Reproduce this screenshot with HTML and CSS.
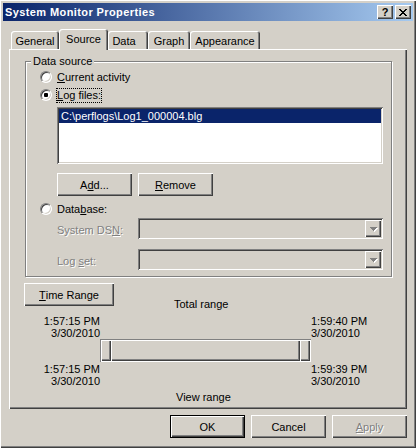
FILE: index.html
```html
<!DOCTYPE html>
<html lang="en">
  <head>
    <meta charset="UTF-8" />
    <title>System Monitor Properties</title>
    <link rel="stylesheet" href="styles.css">
  </head>
  <body>

    <div class="window">
      <div class="titlebar">
        <span class="title">System Monitor Properties</span>
        <span class="cap-btn">?</span>
        <span class="cap-btn">
          <svg width="8" height="7" viewBox="0 0 8 7" shape-rendering="crispEdges">
            <path d="M0 0h2v1h-2z M6 0h2v1h-2z M1 1h2v1h-2z M5 1h2v1h-2z M2 2h4v1h-4z M3 3h2v1h-2z M2 4h4v1h-4z M1 5h2v1h-2z M5 5h2v1h-2z M0 6h2v1h-2z M6 6h2v1h-2z" fill="#000"/>
          </svg>
        </span>
      </div>

      <div class="dialog">
        <div class="tabs">
          <div class="tab tab-general">General</div>
          <div class="tab tab-source active">Source</div>
          <div class="tab tab-data">Data</div>
          <div class="tab tab-graph">Graph</div>
          <div class="tab tab-appearance">Appearance</div>
        </div>

        <div class="panel">
          <div class="group">
            <div class="group-title">Data source</div>

            <div class="option first">
              <span class="radio"></span>
              <span><u>C</u>urrent activity</span>
            </div>
            <div class="option second">
              <span class="radio checked"></span>
              <span class="focus"><u>L</u>og files:</span>
            </div>

            <div class="listbox">
              <div class="list-item selected">C:\perflogs\Log1_000004.blg</div>
            </div>

            <div class="btn-row">
              <button class="btn">A<u>d</u>d...</button>
              <button class="btn"><u>R</u>emove</button>
            </div>

            <div class="option database">
              <span class="radio"></span>
              <span>Data<u>b</u>ase:</span>
            </div>

            <div class="field field-dsn">
              <span class="field-label disabled">System DS<u>N</u>:</span>
              <div class="combo">
                <span class="combo-btn">
                  <svg width="8" height="5" viewBox="0 0 8 5" shape-rendering="crispEdges">
                    <path d="M1 1h7v1h-7z M2 2h5v1h-5z M3 3h3v1h-3z M4 4h1v1h-1z" fill="#fff"/>
                    <path d="M0 0h7v1h-7z M1 1h5v1h-5z M2 2h3v1h-3z M3 3h1v1h-1z" fill="#808080"/>
                  </svg>
                </span>
              </div>
            </div>

            <div class="field field-logset">
              <span class="field-label disabled">Log <u>s</u>et:</span>
              <div class="combo">
                <span class="combo-btn">
                  <svg width="8" height="5" viewBox="0 0 8 5" shape-rendering="crispEdges">
                    <path d="M1 1h7v1h-7z M2 2h5v1h-5z M3 3h3v1h-3z M4 4h1v1h-1z" fill="#fff"/>
                    <path d="M0 0h7v1h-7z M1 1h5v1h-5z M2 2h3v1h-3z M3 3h1v1h-1z" fill="#808080"/>
                  </svg>
                </span>
              </div>
            </div>
          </div>

          <div class="range">
            <div class="range-head">
              <button class="btn btn-time"><u>T</u>ime Range</button>
              <span class="range-caption total">Total range</span>
            </div>

            <div class="range-grid">
              <div class="time time-left">1:57:15 PM<br>3/30/2010</div>
              <div></div>
              <div class="time">1:59:40 PM<br>3/30/2010</div>

              <div></div>
              <div class="slider">
                <span class="thumb"></span>
                <span class="track-mid"></span>
                <span class="thumb"></span>
              </div>
              <div></div>

              <div class="time time-left">1:57:15 PM<br>3/30/2010</div>
              <div></div>
              <div class="time">1:59:39 PM<br>3/30/2010</div>
            </div>

            <div class="range-caption view">View range</div>
          </div>
        </div>

        <div class="actions">
          <button class="btn btn-default">OK</button>
          <button class="btn">Cancel</button>
          <button class="btn disabled"><u>A</u>pply</button>
        </div>
      </div>
    </div>

  </body>
</html>
```

FILE: styles.css
```css
* {
  box-sizing: border-box;
}

body {
  margin: 0;
  padding: 0;
  background-color: #d4d0c8;
  font-family: "Liberation Sans", Arial, sans-serif;
  font-size: 11px;
  color: #000;
}

/* window frame */
.window {
  width: 416px;
  height: 448px;
  padding: 3px;
  background-color: #d4d0c8;
  box-shadow: inset 1px 1px #fff, inset -1px -1px #404040, inset -2px -2px #808080;
}

.titlebar {
  display: flex;
  align-items: center;
  height: 18px;
  padding: 0 2px;
  background: linear-gradient(to right, #0a246a, #a6caf0);
  color: #fff;
  font-weight: bold;
}

.title {
  flex: 1;
  line-height: 13px;
  letter-spacing: 0.4px;
}

.cap-btn {
  display: flex;
  align-items: center;
  justify-content: center;
  width: 16px;
  height: 14px;
  margin-left: 2px;
  background-color: #d4d0c8;
  color: #000;
  line-height: 14px;
  box-shadow: inset 1px 1px #fff, inset -1px -1px #404040, inset -2px -2px #808080;
}

.dialog {
  padding-top: 8px;
}

/* tabs */
.tabs {
  display: flex;
  align-items: flex-end;
  height: 20px;
  margin-left: 8px;
}

.tab {
  height: 18px;
  padding-top: 2px;
  line-height: 16px;
  text-align: center;
  border-radius: 3px 3px 0 0;
  box-shadow: inset 1px 1px #fff, inset -1px 0 #404040, inset -2px 0 #808080;
}

.tab.active {
  position: relative;
  z-index: 1;
  height: 21px;
  margin-bottom: -1px;
  background-color: #d4d0c8;
}

.tab-general { width: 48px; }
.tab-source { width: 49px; }
.tab-data { width: 40px; padding-right: 8px; }
.tab-graph { width: 42px; }
.tab-appearance { width: 70px; }

.panel {
  height: 360px;
  margin: 0 6px;
  padding-top: 12px;
  box-shadow: inset 1px 1px #fff, inset -1px -1px #404040, inset -2px -2px #808080;
}

/* Data source group */
.group {
  width: 367px;
  margin-left: 16px;
  padding: 0 0 6px 14px;
  border: 1px solid #808080;
  box-shadow: inset 1px 1px #fff, 1px 1px #fff;
}

.group-title {
  width: fit-content;
  margin: -7px 0 0 -9px;
  padding: 0 2px;
  line-height: 13px;
  background-color: #d4d0c8;
}

.option {
  display: flex;
  align-items: center;
  gap: 5px;
  height: 16px;
}

.option.first { margin-top: 1px; }
.option.second { margin-top: 2px; gap: 4px; }
.option.database { margin-top: 5px; }

.radio {
  width: 12px;
  height: 12px;
  border-radius: 50%;
  border: 1px solid;
  border-color: #808080 #fff #fff #808080;
  background-color: #fff;
  box-shadow: inset 1px 1px #404040, inset -1px -1px #d4d0c8;
}

.radio.checked {
  background: radial-gradient(circle, #000 2px, #fff 2.5px);
}

.focus {
  border: 1px dotted #000;
  line-height: 13px;
}

.listbox {
  width: 326px;
  height: 57px;
  margin: 4px 0 0 17px;
  padding: 2px;
  background-color: #fff;
  box-shadow: inset 1px 1px #808080, inset -1px -1px #fff, inset 2px 2px #404040, inset -2px -2px #d4d0c8;
}

.list-item {
  height: 14px;
  padding-left: 2px;
  line-height: 15px;
}

.list-item.selected {
  background-color: #0a246a;
  color: #fff;
}

/* buttons */
.btn {
  display: flex;
  align-items: center;
  justify-content: center;
  width: 75px;
  height: 23px;
  padding: 0;
  border: none;
  background-color: #d4d0c8;
  font: inherit;
  color: #000;
  box-shadow: inset 1px 1px #fff, inset -1px -1px #404040, inset -2px -2px #808080;
}

.btn-row {
  display: flex;
  gap: 6px;
  margin: 9px 0 0 17px;
}

.btn-default {
  box-shadow: inset 0 0 0 1px #000, inset 2px 2px #fff, inset -2px -2px #404040, inset -3px -3px #808080;
}

.btn.disabled,
.disabled {
  color: #808080;
  text-shadow: 1px 1px #fff;
}

/* disabled combo fields */
.field {
  display: flex;
  margin-left: 17px;
}

.field-dsn { margin-top: 1px; }
.field-logset { margin-top: 10px; }

.field-label {
  width: 81px;
  padding-top: 4px;
  line-height: 16px;
}

.combo {
  display: flex;
  justify-content: flex-end;
  width: 245px;
  height: 21px;
  padding: 2px;
  box-shadow: inset 1px 1px #808080, inset -1px -1px #fff, inset 2px 2px #404040, inset -2px -2px #d4d0c8;
}

.combo-btn {
  display: flex;
  align-items: center;
  justify-content: center;
  width: 16px;
  height: 17px;
  padding: 1px 0 0 1px;
  box-shadow: inset 1px 1px #fff, inset -1px -1px #404040, inset -2px -2px #808080;
}

/* time range */
.range {
  margin-left: 15px;
}

.range-head {
  display: flex;
  align-items: flex-start;
  margin-top: 6px;
}

.btn-time {
  width: 90px;
}

.range-caption {
  display: block;
  line-height: 13px;
}

.range-caption.total {
  margin: 15px 0 0 60px;
}

.range-caption.view {
  margin: 4px 0 0 152px;
}

.range-grid {
  display: grid;
  grid-template-columns: 76px 211px 1fr;
  margin-top: 4px;
}

.time {
  line-height: 12px;
  white-space: nowrap;
}

.time-left {
  text-align: right;
}

.range-grid .time:nth-child(n+7) {
  margin-top: 1px;
}

.slider {
  display: flex;
  height: 23px;
  padding: 1px;
  box-shadow: inset 1px 1px #808080, inset -1px -1px #fff;
}

.thumb {
  width: 10px;
  box-shadow: inset 1px 1px #fff, inset -1px -1px #404040, inset -2px -2px #808080;
}

.track-mid {
  flex: 1;
  box-shadow: inset 1px 1px #fff, inset -1px -1px #404040, inset -2px -2px #808080;
}

/* dialog buttons */
.actions {
  display: flex;
  justify-content: flex-end;
  gap: 6px;
  margin-top: 6px;
  padding-right: 6px;
}
```
